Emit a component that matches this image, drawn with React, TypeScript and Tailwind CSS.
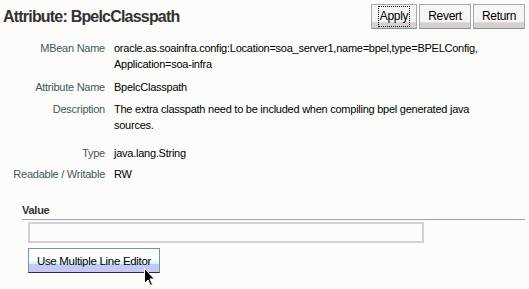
import React from "react";

function TopButton({ children, focused }: { children: React.ReactNode; focused?: boolean }) {
  return (
    <button className="w-full h-[25px] flex items-center justify-center border border-[#a8a8a8] border-b-[#8c8c8c] bg-[linear-gradient(to_bottom,#f7f7f7_0%,#f4f4f4_74%,#ecd4d4_74%,#ecd4d4_78%,#d2d2d2_78%,#d2d2d2_100%)] text-[12px] text-black tracking-[-0.3px]">
      {focused ? (
        <span className="border border-dotted border-black px-[1px] leading-[19px] -mt-[1px]">{children}</span>
      ) : (
        <span className="leading-[19px]">{children}</span>
      )}
    </button>
  );
}

export default function App() {
  const labelCls = "w-[105px] shrink-0 text-right text-[#3f5959]";
  return (
    <div
      className="relative w-[529px] h-[289px] overflow-hidden bg-[#fcfdfa] text-[11px] leading-[16px] tracking-[-0.25px] text-black"
      style={{ fontFamily: '"Liberation Sans", Arial, sans-serif' }}
    >
      <div className="flex items-center justify-between pt-[4px] pr-[4px] pl-[3px]">
        <div className="text-[16px] font-bold text-[#333333] tracking-[-0.8px] leading-[25px]">
          Attribute: BpelcClasspath
        </div>
        <div className="flex gap-[2px]">
          <div className="w-[46px]">
            <TopButton focused>Apply</TopButton>
          </div>
          <div className="w-[52px]">
            <TopButton>Revert</TopButton>
          </div>
          <div className="w-[52px]">
            <TopButton>Return</TopButton>
          </div>
        </div>
      </div>

      <div className="mt-[11px] flex flex-col">
        <div className="flex">
          <div className={labelCls}>MBean Name</div>
          <div className="ml-[9px] w-[400px]">
            oracle.as.soainfra.config:Location=soa_server1,name=bpel,type=BPELConfig,
            <br />
            Application=soa-infra
          </div>
        </div>
        <div className="flex mt-[7px]">
          <div className={labelCls}>Attribute Name</div>
          <div className="ml-[9px]">BpelcClasspath</div>
        </div>
        <div className="flex mt-[6px]">
          <div className={labelCls}>Description</div>
          <div className="ml-[9px] w-[400px]">
            The extra classpath need to be included when compiling bpel generated java
            <br />
            sources.
          </div>
        </div>
        <div className="flex mt-[12px]">
          <div className={labelCls}>Type</div>
          <div className="ml-[9px]">java.lang.String</div>
        </div>
        <div className="flex mt-[5px]">
          <div className={labelCls}>Readable / Writable</div>
          <div className="ml-[9px]">RW</div>
        </div>
      </div>

      <div className="mt-[20px] ml-[22px] mr-[4px]">
        <div className="font-bold text-[#333333] pb-[1px] border-b border-[#a09bd3]">Value</div>
        <div className="ml-[6px] mt-[2px] w-[396px] h-[21px] border-2 border-[#d2d2d2] bg-[#fcfdfa]" />
        <button className="ml-[6px] mt-[5px] w-[132px] h-[25px] flex items-center justify-center border border-[#6a9c9c] border-b-[#2a2a48] bg-[linear-gradient(to_bottom,#fdfefd_0%,#fdfefd_52%,#d6f8f6_52%,#d6f8f6_64%,#c8c8f6_64%,#c8c8f6_100%)] text-[11.5px] tracking-[-0.3px] text-black">
          <span>Use Multiple Line Editor</span>
        </button>
      </div>

      <svg
        className="absolute left-[144px] top-[268px]"
        width="12"
        height="19"
        viewBox="0 0 12 19"
      >
        <path
          d="M0.5 0.5 L0.5 15.5 L4 12 L6.5 17.5 L8.5 16.5 L6 11 L10.5 11 Z"
          fill="#000"
          stroke="#fff"
          strokeWidth="1"
        />
      </svg>
    </div>
  );
}
